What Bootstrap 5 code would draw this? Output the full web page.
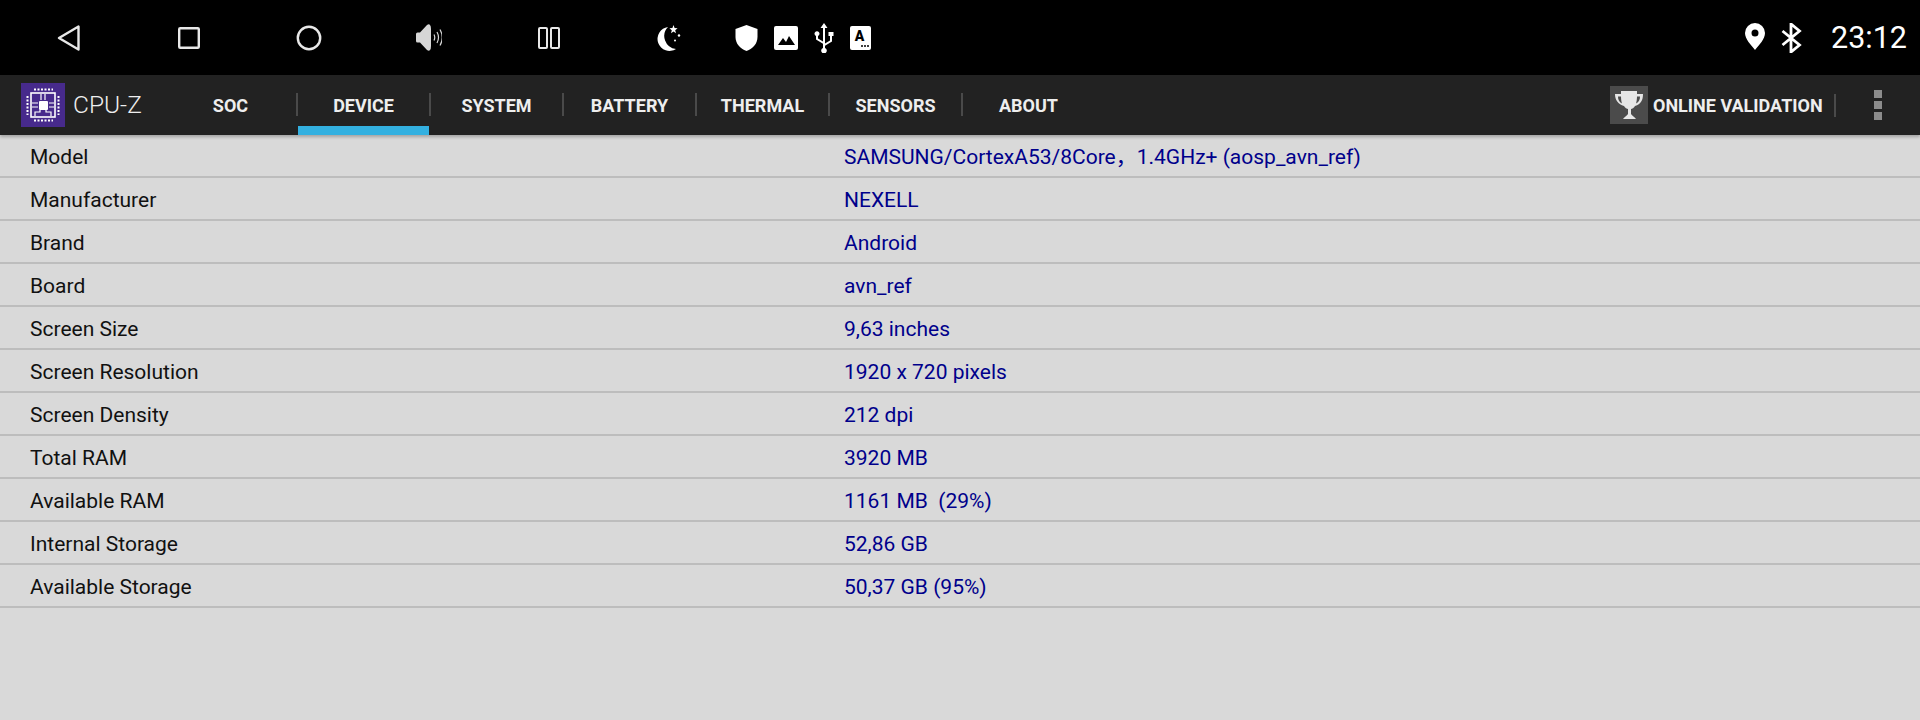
<!DOCTYPE html>
<html lang="en">
<head>
  <meta charset="UTF-8">
  <meta name="viewport" content="width=device-width, initial-scale=1.0">
  <title>CPU-Z</title>
  <link href="https://cdn.jsdelivr.net/npm/bootstrap@5.3.0/dist/css/bootstrap.min.css" rel="stylesheet">
  <style>
    body { background: #d9d9d9; font-family: Roboto, "Noto Sans CJK SC", sans-serif; height: 720px; overflow: hidden; }
    .status-bar { background: #000; height: 75px; padding-left: 9px; padding-right: 13px; color: #fff; }
    .nav-slot { width: 120px; height: 75px; }
    .note-icons { padding-left: 6px; }
    .status-time { font-size: 30.500px; margin-left: 29px; margin-top: 2px; line-height: 1; }
    .pin-icon { margin-top: -3px; }
    .tool-bar { background: #222; height: 60px; box-shadow: 0 2px 3px rgba(0,0,0,.25); position: relative; }
    .app-logo { margin-left: 21px; width: 44px; height: 44px; }
    .app-name { color: #eee; font-size: 24.500px; font-weight: 300; width: 91px; margin-left: 8px; line-height: 1; }
    .tab-strip .nav-link { width: 133px; height: 60px; padding: 0; color: #eee; font-weight: 700; font-size: 18px; position: relative; }
    .tab-strip .nav-link + .nav-link::before { content: ""; position: absolute; left: -1px; top: 18px; height: 23px; width: 2px; background: #4a4a4a; }
    .tab-strip .nav-link.active { background: transparent; color: #eee; }
    .tab-strip .nav-link.active::after { content: ""; position: absolute; left: 1px; right: 1px; bottom: 0; height: 9px; background: #33b0e0; }
    .trophy-box { width: 38px; height: 38px; background: #4b4b4b; }
    .valid-text { color: #eee; font-weight: 700; font-size: 18px; margin-left: 5px; width: 181px; height: 38px; white-space: nowrap; }
    .tool-sep { width: 2px; height: 23px; background: #4a4a4a; }
    .more-dots { width: 84px; gap: 3px; }
    .more-dots span { display: block; width: 8px; height: 8px; background: #8c8c8c; }
    .info-list { --bs-list-group-bg: transparent; --bs-list-group-border-color: #bdbdbd; --bs-list-group-border-width: 2px; --bs-list-group-border-radius: 0; }
    .info-list .list-group-item { height: 43px; padding: 4px 0 0 30px; font-size: 21px; color: #111; }
    .info-list .list-group-item:last-child { border-bottom: 2px solid #bdbdbd; }
    .info-name { width: 814px; }
    .info-value { color: #00008b; white-space: pre; }
  </style>
</head>
<body>
  <!-- barra de status -->
  <div class="status-bar d-flex align-items-center">
    <div class="nav-slot d-flex align-items-center justify-content-center">
      <svg width="24" height="26" viewBox="0 0 24 26"><path d="M21.500 1.500v23L2 13z" fill="none" stroke="#e8e8e8" stroke-width="2.400" stroke-linejoin="round"/></svg>
    </div>
    <div class="nav-slot d-flex align-items-center justify-content-center">
      <svg width="22" height="22" viewBox="0 0 22 22"><rect x="1.200" y="1.200" width="19.600" height="19.600" rx="1" fill="none" stroke="#e8e8e8" stroke-width="2.400"/></svg>
    </div>
    <div class="nav-slot d-flex align-items-center justify-content-center">
      <svg width="26" height="26" viewBox="0 0 26 26"><circle cx="13" cy="13" r="11.200" fill="none" stroke="#e8e8e8" stroke-width="2.400"/></svg>
    </div>
    <div class="nav-slot d-flex align-items-center justify-content-center">
      <svg width="26" height="27" viewBox="0 0 26 27"><path d="M0 10q0-1.500 1.500-1.500H4L11 1q2-1.500 3 0 1 1 1 4v17q0 3-1 4-1 1.500-3 0l-7-7.500H1.500Q0 18.500 0 17z" fill="#d6d6d6"/><path d="M18 10.500q1.500 3 0 6M21 8q3 5.500 0 11M24 5.500q4.500 8 0 16" fill="none" stroke="#d6d6d6" stroke-width="1.200"/></svg>
    </div>
    <div class="nav-slot d-flex align-items-center justify-content-center">
      <svg width="22" height="22" viewBox="0 0 22 22"><rect x="1" y="1" width="8" height="20" rx="1" fill="none" stroke="#e8e8e8" stroke-width="2"/><rect x="13" y="1" width="8" height="20" rx="1" fill="none" stroke="#e8e8e8" stroke-width="2"/></svg>
    </div>
    <div class="nav-slot d-flex align-items-center justify-content-center">
      <svg width="24" height="26" viewBox="0 0 24 26"><path d="M11 2A12 12 0 1 0 19 24 13 13 0 0 1 11 2z" fill="#fff"/><path d="M16.500 0l1.100 3 3 .2-2.400 2 .8 3-2.500-1.700L14 8.200l.8-3-2.400-2 3-.2z" fill="#fff"/><circle cx="22" cy="10.500" r="1.200" fill="#fff"/><circle cx="18" cy="15.500" r="1" fill="#fff"/></svg>
    </div>
    <div class="note-icons d-flex align-items-center">
      <svg class="me-3" width="23" height="26" viewBox="0 0 23 26"><path d="M11.500 0l11 4v8c0 6.500-4.500 11.500-11 14C5 23.500.5 18.500.5 12V4z" fill="#fff"/></svg>
      <svg class="me-3" width="24" height="24" viewBox="0 0 24 24"><path d="M2 0h20a2 2 0 0 1 2 2v20a2 2 0 0 1-2 2H2a2 2 0 0 1-2-2V2a2 2 0 0 1 2-2z" fill="#fff"/><path d="M4 19l5-7 3 4 3-6 6 9z" fill="#000"/></svg>
      <svg class="me-3" width="20" height="30" viewBox="0 0 20 30"><path d="M10 0l3.500 5H11v15.500l5-3V13h-1.500V9h5v4H18v5.600l-7 4.200V25a2.800 2.800 0 1 1-2 0v-4.200L2 16.500V13a2.500 2.500 0 1 1 2 0v2.400l5 3V5H6.500z" fill="#fff"/></svg>
      <svg width="21" height="24" viewBox="0 0 21 24"><rect width="21" height="24" rx="2" fill="#fff"/><text x="9.500" y="15" text-anchor="middle" font-family="Roboto" font-weight="900" font-size="14" fill="#000">A</text><circle cx="12" cy="20" r="1" fill="#000"/><circle cx="15" cy="20" r="1" fill="#000"/><circle cx="18" cy="20" r="1" fill="#000"/></svg>
    </div>
    <div class="ms-auto d-flex align-items-center">
      <svg class="pin-icon" width="20" height="27" viewBox="0 0 20 27"><path fill-rule="evenodd" d="M10 0a10 10 0 0 1 10 10c0 6-6 12-10 17C6 22 0 16 0 10A10 10 0 0 1 10 0zm0 6.500a3.500 3.500 0 1 0 0 7 3.500 3.500 0 0 0 0-7z" fill="#fff"/></svg>
      <svg class="ms-3" width="21" height="30" viewBox="0 0 21 30"><path d="M1.500 8l17 14L10 29V1l8.500 7L1.500 22" fill="none" stroke="#fff" stroke-width="2.800"/></svg>
      <span class="status-time">23:12</span>
    </div>
  </div>

  <!-- barra de abas -->
  <div class="tool-bar d-flex align-items-center">
    <svg class="app-logo" viewBox="0 0 44 44">
      <rect width="44" height="44" fill="#472a8c"/>
      <rect x="10" y="10" width="24" height="24" fill="none" stroke="#fff" stroke-width="1.600"/>
      <rect x="18" y="18" width="9" height="9" rx="1" fill="#fff"/>
      <path d="M20 11v6M24 11v6M11 20h6M11 24h6M28 20h5M28 24h5M14 33v-4h5v-2M30 33v-4h-5v-2" fill="none" stroke="#fff" stroke-width="1.200"/>
      <path d="M13 6.500h19M13 37.500h19M6.500 13v19M37.500 13v19" stroke="#fff" stroke-width="2" stroke-dasharray="2 1.500"/>
    </svg>
    <span class="app-name">CPU-Z</span>
    <nav class="nav tab-strip">
      <a class="nav-link d-flex align-items-center justify-content-center" href="#">SOC</a>
      <a class="nav-link active d-flex align-items-center justify-content-center" href="#">DEVICE</a>
      <a class="nav-link d-flex align-items-center justify-content-center" href="#">SYSTEM</a>
      <a class="nav-link d-flex align-items-center justify-content-center" href="#">BATTERY</a>
      <a class="nav-link d-flex align-items-center justify-content-center" href="#">THERMAL</a>
      <a class="nav-link d-flex align-items-center justify-content-center" href="#">SENSORS</a>
      <a class="nav-link d-flex align-items-center justify-content-center" href="#">ABOUT</a>
    </nav>
    <div class="ms-auto d-flex align-items-center">
      <div class="trophy-box d-flex align-items-center justify-content-center">
        <svg width="30" height="30" viewBox="0 0 30 30"><path d="M7 1h16v3h6c0 6-2 10-8 12-1 2-3 3-4 3v5c1 2 4 3 5 5H9c1-2 4-3 5-5v-5c-1 0-3-1-4-3C4 14 1 10 1 4h6zM4 6.500c0 3 1 5.500 4 7-.6-2-1-4.500-1-7zM26 6.500h-3c0 2.500-.4 5-1 7 3-1.500 4-4 4-7z" fill="#e6e6e6" fill-rule="evenodd"/></svg>
      </div>
      <span class="valid-text d-flex align-items-center">ONLINE VALIDATION</span>
      <span class="tool-sep"></span>
      <div class="more-dots d-flex flex-column align-items-center">
        <span></span><span></span><span></span>
      </div>
    </div>
  </div>

  <!-- lista de dados -->
  <ul class="list-group list-group-flush info-list" id="info-list"></ul>

  <script>
    // Linhas da tabela de dados do aparelho
    const linhas = [
      ['Model', 'SAMSUNG/CortexA53/8Core，1.4GHz+ (aosp_avn_ref)'],
      ['Manufacturer', 'NEXELL'],
      ['Brand', 'Android'],
      ['Board', 'avn_ref'],
      ['Screen Size', '9,63 inches'],
      ['Screen Resolution', '1920 x 720 pixels'],
      ['Screen Density', '212 dpi'],
      ['Total RAM', '3920 MB'],
      ['Available RAM', '1161 MB  (29%)'],
      ['Internal Storage', '52,86 GB'],
      ['Available Storage', '50,37 GB (95%)']
    ];
    const lista = document.getElementById('info-list');
    linhas.forEach(l => {
      const item = document.createElement('li');
      item.className = 'list-group-item d-flex align-items-center';
      item.innerHTML = `<span class="info-name">${l[0]}</span><span class="info-value">${l[1]}</span>`;
      lista.appendChild(item);
    });
  </script>
  <script src="https://cdn.jsdelivr.net/npm/bootstrap@5.3.0/dist/js/bootstrap.bundle.min.js"></script>
</body>
</html>
